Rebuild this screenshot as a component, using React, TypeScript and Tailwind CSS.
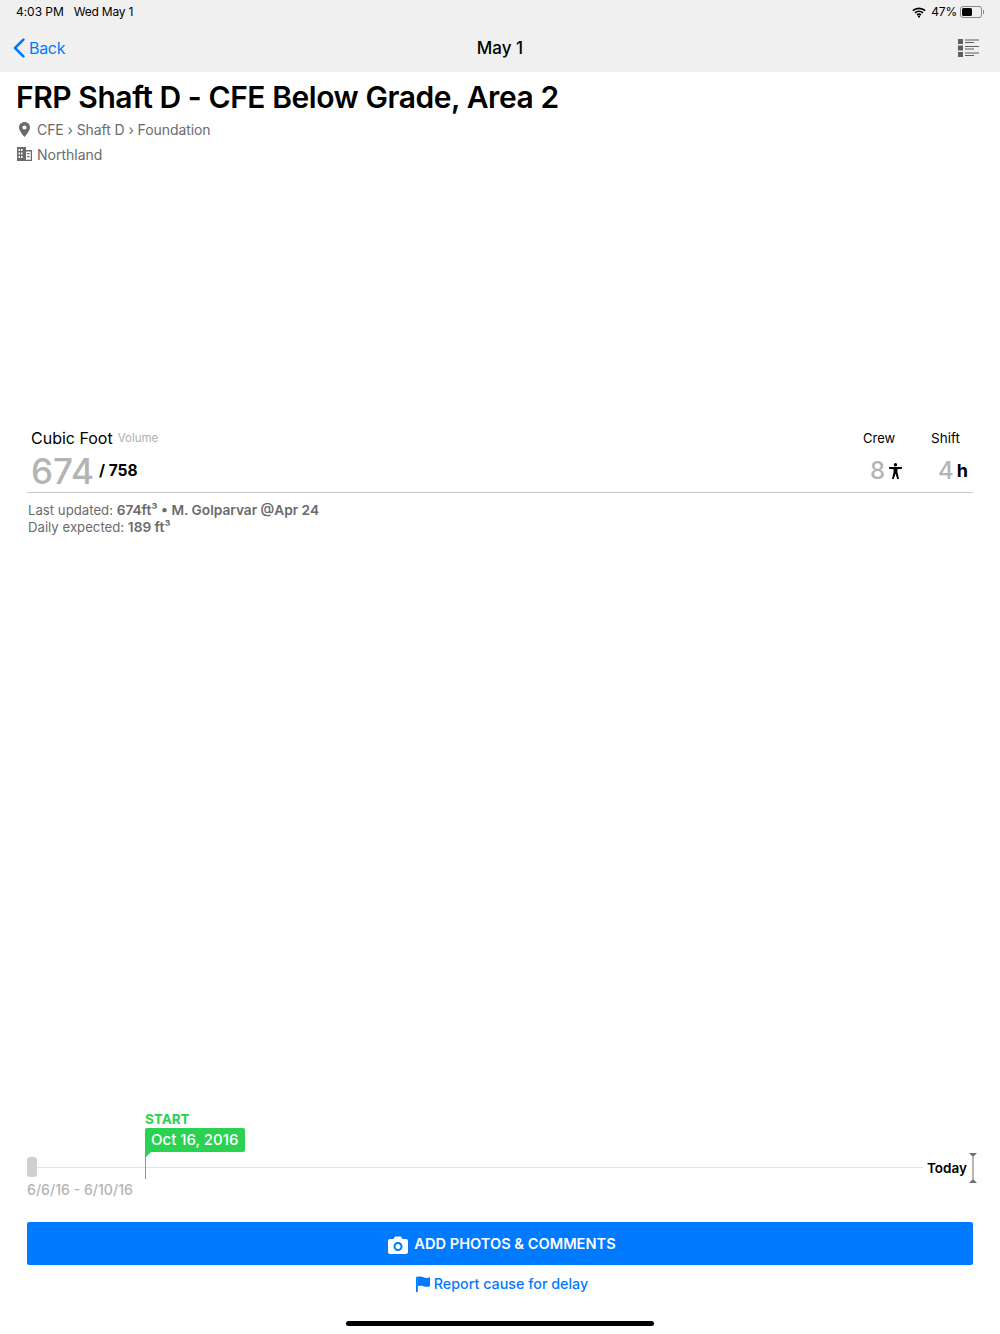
function Wifi() {
  return (
    <svg width="14" height="11" viewBox="0 0 14 11" fill="none" stroke="#000" strokeWidth="1.7">
      <path d="M0.8 3.6C4.3 0.5 9.7 0.5 13.2 3.6" />
      <path d="M3 5.9C5.3 3.9 8.7 3.9 11 5.9" />
      <path d="M5.1 8C6.2 7.1 7.8 7.1 8.9 8" />
      <circle cx="7" cy="9.6" r="1.1" fill="#000" stroke="none" />
    </svg>
  );
}

function Battery() {
  return (
    <div className="flex items-center">
      <div className="w-[22px] h-[12px] rounded-[3px] border border-[#8a8a8a] p-[1px]">
        <div className="w-[10px] h-full rounded-[1.5px] bg-black" />
      </div>
      <div className="w-[1px] h-[4px] ml-[1px] bg-[#8a8a8a]" />
    </div>
  );
}

function BackChevron() {
  return (
    <svg width="12" height="20" viewBox="0 0 12 20" fill="none" stroke="#007aff" strokeWidth="2.6" strokeLinecap="round" strokeLinejoin="round">
      <path d="M10.4 1.6L2 10L10.4 18.4" />
    </svg>
  );
}

function ListIcon() {
  return (
    <svg width="21" height="18" viewBox="0 0 21 18" fill="#5f5f5f" className="mb-[2px]">
      <rect x="0" y="0" width="5" height="5" />
      <rect x="0" y="6.5" width="5" height="5" />
      <rect x="0" y="13" width="5" height="5" />
      <rect x="7" y="0.5" width="14" height="1" />
      <rect x="7" y="3" width="9" height="1" />
      <rect x="7" y="7" width="14" height="1" />
      <rect x="7" y="9.5" width="9" height="1" />
      <rect x="7" y="13.5" width="14" height="1" />
      <rect x="7" y="16" width="9" height="1" />
    </svg>
  );
}

function PinIcon() {
  return (
    <svg width="11" height="15" viewBox="0 0 11 15">
      <path
        fillRule="evenodd"
        fill="#6b6b6b"
        d="M5.5 0C2.5 0 0 2.4 0 5.4 0 9 5.5 15 5.5 15S11 9 11 5.4C11 2.4 8.5 0 5.5 0ZM5.5 3.4a2.1 2.1 0 1 1 0 4.2 2.1 2.1 0 0 1 0-4.2Z"
      />
    </svg>
  );
}

function BuildingIcon() {
  return (
    <svg width="15" height="14" viewBox="0 0 15 14" fill="#6b6b6b">
      <path
        fillRule="evenodd"
        d="M0 0H9V3H15V14H0ZM1.5 2V4H3V2ZM4 2V4H5.5V2ZM1.5 5.5V7.5H3V5.5ZM4 5.5V7.5H5.5V5.5ZM1.5 9V11H3V9ZM4 9V11H5.5V9ZM9 4.5V12.8H13.8V4.5ZM10.2 6H12.6V7.2H10.2ZM10.2 9H12.6V10.2H10.2Z"
      />
    </svg>
  );
}

function PersonIcon() {
  return (
    <svg width="13" height="16" viewBox="0 0 13 16" fill="#000">
      <circle cx="6.5" cy="1.7" r="1.7" />
      <path d="M0 4.1H13V5.7L8.4 6.2V9L10 16H8.2L6.5 10.4 4.8 16H3L4.6 9V6.2L0 5.7Z" />
    </svg>
  );
}

function CameraIcon() {
  return (
    <svg width="20" height="18" viewBox="0 0 20 18">
      <path
        fillRule="evenodd"
        fill="#fff"
        d="M2 3H5.5L7 0.5H13L14.5 3H18C19.1 3 20 3.9 20 5V16C20 17.1 19.1 18 18 18H2C0.9 18 0 17.1 0 16V5C0 3.9 0.9 3 2 3ZM10 6A4.5 4.5 0 1 0 10 15 4.5 4.5 0 0 0 10 6ZM10 8A2.5 2.5 0 1 1 10 13 2.5 2.5 0 0 1 10 8Z"
      />
    </svg>
  );
}

function FlagIcon() {
  return (
    <svg width="14" height="16" viewBox="0 0 14 16" fill="#007aff">
      <path d="M0 0.8H1.8V16H0Z" />
      <path d="M1.8 0.8C4 0.2 5.5 0.4 7.5 1.2 9.5 2 11.5 2.2 14 1.2V10.2C11.5 11 9.5 10.8 7.5 10.2 5.5 9.6 4 9.6 1.8 10.2Z" />
    </svg>
  );
}

export default function App() {
  return (
    <div
      className="h-[1334px] w-[1000px] flex flex-col bg-white overflow-hidden"
      style={{ fontFamily: "Inter, 'Liberation Sans', sans-serif" }}
    >
      {/* Status + nav */}
      <header className="h-[72px] bg-[#f0f0f0] shrink-0">
        <div className="h-[24px] pl-[16px] pr-[16px] flex items-center justify-between text-[12px] text-black">
          <div className="flex gap-[10px] tracking-[-0.05px]">
            <span>4:03 PM</span>
            <span className="tracking-[-0.2px]">Wed May 1</span>
          </div>
          <div className="flex items-center">
            <Wifi />
            <span className="ml-[5px] mr-[3px] tracking-[-0.2px]">47%</span>
            <Battery />
          </div>
        </div>
        <div className="h-[48px] pt-[1px] pl-[13px] pr-[21px] flex items-center justify-between relative">
          <div className="flex items-center gap-[4px] mb-[2px] text-[#007aff] text-[16px] tracking-[-0.3px]">
            <BackChevron />
            <span>Back</span>
          </div>
          <div className="absolute left-0 right-0 text-center text-[17px] font-medium text-black">May 1</div>
          <ListIcon />
        </div>
      </header>

      {/* Title */}
      <section className="px-[16px] pt-[6px] shrink-0">
        <h1 className="text-[30px] leading-[38px] font-semibold text-black tracking-[-0.44px]">
          FRP Shaft D - CFE Below Grade, Area 2
        </h1>
        <div className="mt-[1px] h-[24px] flex items-center text-[14px] text-[#6b6b6b]">
          <span className="w-[21px] pl-[3px] flex">
            <PinIcon />
          </span>
          <span className="tracking-[-0.08px]">CFE › Shaft D › Foundation</span>
        </div>
        <div className="mt-[1px] h-[24px] flex items-center text-[14px] text-[#6b6b6b]">
          <span className="w-[21px] pl-[1px] flex">
            <BuildingIcon />
          </span>
          <span>Northland</span>
        </div>
      </section>

      {/* Metric */}
      <section className="mt-[261px] mx-[27px] shrink-0">
        <div className="border-b border-[#c8c8c8] h-[66px] flex justify-between">
          <div className="pl-[4px]">
            <div className="flex items-center gap-[5px] h-[22px] mb-[1px]">
              <span className="text-[16px] text-black">Cubic Foot</span>
              <span className="mt-[2px] text-[11.5px] text-[#b0b0b0]">Volume</span>
            </div>
            <div className="flex items-center gap-[5px] h-[42px]">
              <span className="text-[35px] leading-[42px] font-medium text-[#b4b4b4]">674</span>
              <span className="text-[15.5px] font-bold text-black">/ 758</span>
            </div>
          </div>
          <div className="flex">
            <div className="w-[68px] flex flex-col">
              <span className="text-[13px] leading-[22px] text-black">Crew</span>
              <div className="flex items-center gap-[4px] h-[44px] pl-[7px]">
                <span className="text-[24px] font-medium text-[#b4b4b4]">8</span>
                <PersonIcon />
              </div>
            </div>
            <div className="w-[42px] flex flex-col">
              <span className="text-[13.5px] leading-[22px] text-black">Shift</span>
              <div className="flex items-center gap-[3px] h-[44px] pl-[7px]">
                <span className="text-[24px] font-medium text-[#b4b4b4]">4</span>
                <span className="text-[18px] font-bold text-black">h</span>
              </div>
            </div>
          </div>
        </div>
        <div className="mt-[9px] pl-[1px] text-[13.2px] leading-[17px] text-[#6b6b6b]">
          <p>
            Last updated: <b className="text-[13.7px] font-semibold">674ft³ • M. Golparvar @Apr 24</b>
          </p>
          <p>
            Daily expected: <b className="text-[13.7px] font-semibold">189 ft³</b>
          </p>
        </div>
      </section>

      <div className="flex-1" />

      {/* Timeline */}
      <section className="mx-[27px] h-[90px] relative shrink-0">
        <div className="absolute left-0 right-[50px] top-[55px] h-[1px] bg-[#e5e5e5]" />
        <div className="absolute left-0 top-[45px] w-[10px] h-[20px] rounded-[3px] bg-[#d0d0d4]" />
        <div className="absolute left-[118px] top-[-1px]">
          <div className="text-[13.5px] leading-[17px] font-bold text-[#2bd151]">START</div>
          <div className="w-[100px] h-[24px] rounded-[2px] rounded-bl-none bg-[#2bd151] text-white text-[15px] leading-[24px] pl-[6px] font-medium">
            Oct 16, 2016
          </div>
          <div className="w-[1px] h-[27px] bg-[#2bd151]" />
          <svg className="absolute left-[1px] top-[41px]" width="5" height="5" viewBox="0 0 5 5" fill="#2bd151">
            <path d="M0 0H5L0 5Z" />
          </svg>
        </div>
        <div className="absolute right-[6px] top-[48px] text-[13.5px] leading-[17px] font-semibold text-black">Today</div>
        <svg className="absolute right-[-4px] top-[41px]" width="8" height="30" viewBox="0 0 8 30" fill="#6e6e6e">
          <path d="M0 0H8L5 3H3Z" />
          <path d="M0 30H8L5 27H3Z" />
          <rect x="3.5" y="2" width="1" height="26" />
        </svg>
        <div className="absolute left-0 top-[69px] text-[14.1px] leading-[17px] font-medium text-[#b4b4b4]">
          6/6/16 - 6/10/16
        </div>
      </section>

      {/* Actions */}
      <section className="mt-[20px] mx-[27px] shrink-0">
        <button className="w-full h-[43px] pl-[4px] pt-[2px] rounded-[2px] bg-[#007aff] text-white flex items-center justify-center gap-[6px] text-[14.6px] font-semibold">
          <CameraIcon />
          ADD PHOTOS &amp; COMMENTS
        </button>
        <div className="mt-[10px] h-[17px] pl-[4px] flex items-center justify-center gap-[4px] text-[14.3px] font-medium text-[#007aff]">
          <FlagIcon />
          Report cause for delay
        </div>
      </section>

      <div className="mt-[29px] mb-[8px] mx-auto w-[308px] h-[5px] rounded-full bg-black shrink-0" />
    </div>
  );
}
